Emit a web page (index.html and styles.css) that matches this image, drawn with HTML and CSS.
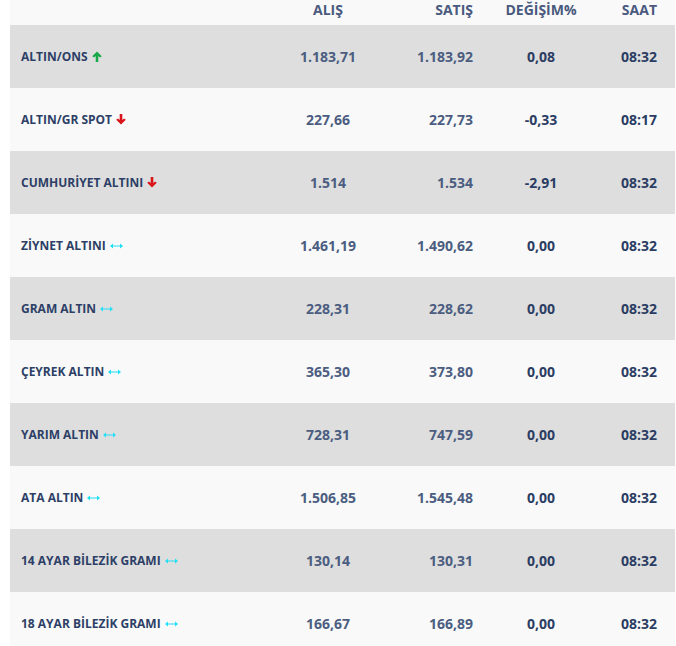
FILE: index.html
```html
<!DOCTYPE html>
<html lang="tr">
<head>
<meta charset="utf-8">
<link rel="stylesheet" href="styles.css">
</head>
<body>
<div class="table">
  <div class="row head">
    <div class="c name"></div>
    <div class="c buy">ALIŞ</div>
    <div class="c sell">SATIŞ</div>
    <div class="c chg">DEĞİŞİM%</div>
    <div class="c time">SAAT</div>
  </div>

  <div class="row dark">
    <div class="c name">ALTIN/ONS <svg class="ic up" viewBox="0 0 10 11"><path d="M5 0.5 L9.8 5.3 L8 6.6 L6.3 4.9 L6.3 11 L3.7 11 L3.7 4.9 L2 6.6 L0.2 5.3 Z"/></svg></div>
    <div class="c buy">1.183,71</div><div class="c sell">1.183,92</div><div class="c chg">0,08</div><div class="c time">08:32</div>
  </div>
  <div class="row light">
    <div class="c name">ALTIN/GR SPOT <svg class="ic down" viewBox="0 0 10 11"><path d="M5 10.5 L9.8 5.7 L8 4.4 L6.3 6.1 L6.3 0 L3.7 0 L3.7 6.1 L2 4.4 L0.2 5.7 Z"/></svg></div>
    <div class="c buy">227,66</div><div class="c sell">227,73</div><div class="c chg">-0,33</div><div class="c time">08:17</div>
  </div>
  <div class="row dark">
    <div class="c name">CUMHURİYET ALTINI <svg class="ic down" viewBox="0 0 10 11"><path d="M5 10.5 L9.8 5.7 L8 4.4 L6.3 6.1 L6.3 0 L3.7 0 L3.7 6.1 L2 4.4 L0.2 5.7 Z"/></svg></div>
    <div class="c buy">1.514</div><div class="c sell">1.534</div><div class="c chg">-2,91</div><div class="c time">08:32</div>
  </div>
  <div class="row light">
    <div class="c name">ZİYNET ALTINI <svg class="ic eq" viewBox="0 0 13 6"><path d="M0 3 L3 0.5 L3 2.4 L10 2.4 L10 0.5 L13 3 L10 5.5 L10 3.6 L3 3.6 L3 5.5 Z"/></svg></div>
    <div class="c buy">1.461,19</div><div class="c sell">1.490,62</div><div class="c chg">0,00</div><div class="c time">08:32</div>
  </div>
  <div class="row dark">
    <div class="c name">GRAM ALTIN <svg class="ic eq" viewBox="0 0 13 6"><path d="M0 3 L3 0.5 L3 2.4 L10 2.4 L10 0.5 L13 3 L10 5.5 L10 3.6 L3 3.6 L3 5.5 Z"/></svg></div>
    <div class="c buy">228,31</div><div class="c sell">228,62</div><div class="c chg">0,00</div><div class="c time">08:32</div>
  </div>
  <div class="row light">
    <div class="c name">ÇEYREK ALTIN <svg class="ic eq" viewBox="0 0 13 6"><path d="M0 3 L3 0.5 L3 2.4 L10 2.4 L10 0.5 L13 3 L10 5.5 L10 3.6 L3 3.6 L3 5.5 Z"/></svg></div>
    <div class="c buy">365,30</div><div class="c sell">373,80</div><div class="c chg">0,00</div><div class="c time">08:32</div>
  </div>
  <div class="row dark">
    <div class="c name">YARIM ALTIN <svg class="ic eq" viewBox="0 0 13 6"><path d="M0 3 L3 0.5 L3 2.4 L10 2.4 L10 0.5 L13 3 L10 5.5 L10 3.6 L3 3.6 L3 5.5 Z"/></svg></div>
    <div class="c buy">728,31</div><div class="c sell">747,59</div><div class="c chg">0,00</div><div class="c time">08:32</div>
  </div>
  <div class="row light">
    <div class="c name">ATA ALTIN <svg class="ic eq" viewBox="0 0 13 6"><path d="M0 3 L3 0.5 L3 2.4 L10 2.4 L10 0.5 L13 3 L10 5.5 L10 3.6 L3 3.6 L3 5.5 Z"/></svg></div>
    <div class="c buy">1.506,85</div><div class="c sell">1.545,48</div><div class="c chg">0,00</div><div class="c time">08:32</div>
  </div>
  <div class="row dark">
    <div class="c name">14 AYAR BİLEZİK GRAMI <svg class="ic eq" viewBox="0 0 13 6"><path d="M0 3 L3 0.5 L3 2.4 L10 2.4 L10 0.5 L13 3 L10 5.5 L10 3.6 L3 3.6 L3 5.5 Z"/></svg></div>
    <div class="c buy">130,14</div><div class="c sell">130,31</div><div class="c chg">0,00</div><div class="c time">08:32</div>
  </div>
  <div class="row light">
    <div class="c name">18 AYAR BİLEZİK GRAMI <svg class="ic eq" viewBox="0 0 13 6"><path d="M0 3 L3 0.5 L3 2.4 L10 2.4 L10 0.5 L13 3 L10 5.5 L10 3.6 L3 3.6 L3 5.5 Z"/></svg></div>
    <div class="c buy">166,67</div><div class="c sell">166,89</div><div class="c chg">0,00</div><div class="c time">08:32</div>
  </div>
</div>
</body>
</html>
```

FILE: styles.css
```css
html, body {
  margin: 0;
  padding: 0;
  background: #ffffff;
}
body {
  padding: 0 1px 0 10px;
  font-family: "Open Sans", "DejaVu Sans", sans-serif;
  font-weight: 700;
  overflow: hidden;
}
.table {
  width: 665px;
}
.row {
  display: grid;
  grid-template-columns: 260px 116px 97px 116px 76px;
  align-items: center;
  height: 63px;
}
.row.head {
  height: 25px;
  background: #f9f9f9;
  font-size: 14px;
  color: #4a5a7e;
  align-items: start;
  padding-top: 0;
  box-sizing: border-box;
}
.row.dark { background: #dedede; }
.row.light { background: #f9f9f9; }
.c { white-space: nowrap; }
.name {
  padding-left: 11px;
  font-size: 12px;
  color: #2d3f66;
  display: flex;
  align-items: center;
  gap: 4px;
}
.buy { text-align: center; }
.sell { text-align: right; padding-right: 10px; }
.chg { text-align: center; }
.time { text-align: right; padding-right: 18px; }
.dark .buy, .dark .sell, .light .buy, .light .sell {
  font-size: 14px;
  color: #4b5d80;
}
.dark .chg, .dark .time, .light .chg, .light .time {
  font-size: 14px;
  color: #2b3d63;
}
.ic { display: block; }
.ic.up, .ic.down { width: 10px; height: 11px; }
.ic.up path { fill: #1aa94a; }
.ic.down path { fill: #d9141b; }
.ic.eq { width: 13px; height: 6px; }
.ic.eq path { fill: #1fe0f5; }
```
